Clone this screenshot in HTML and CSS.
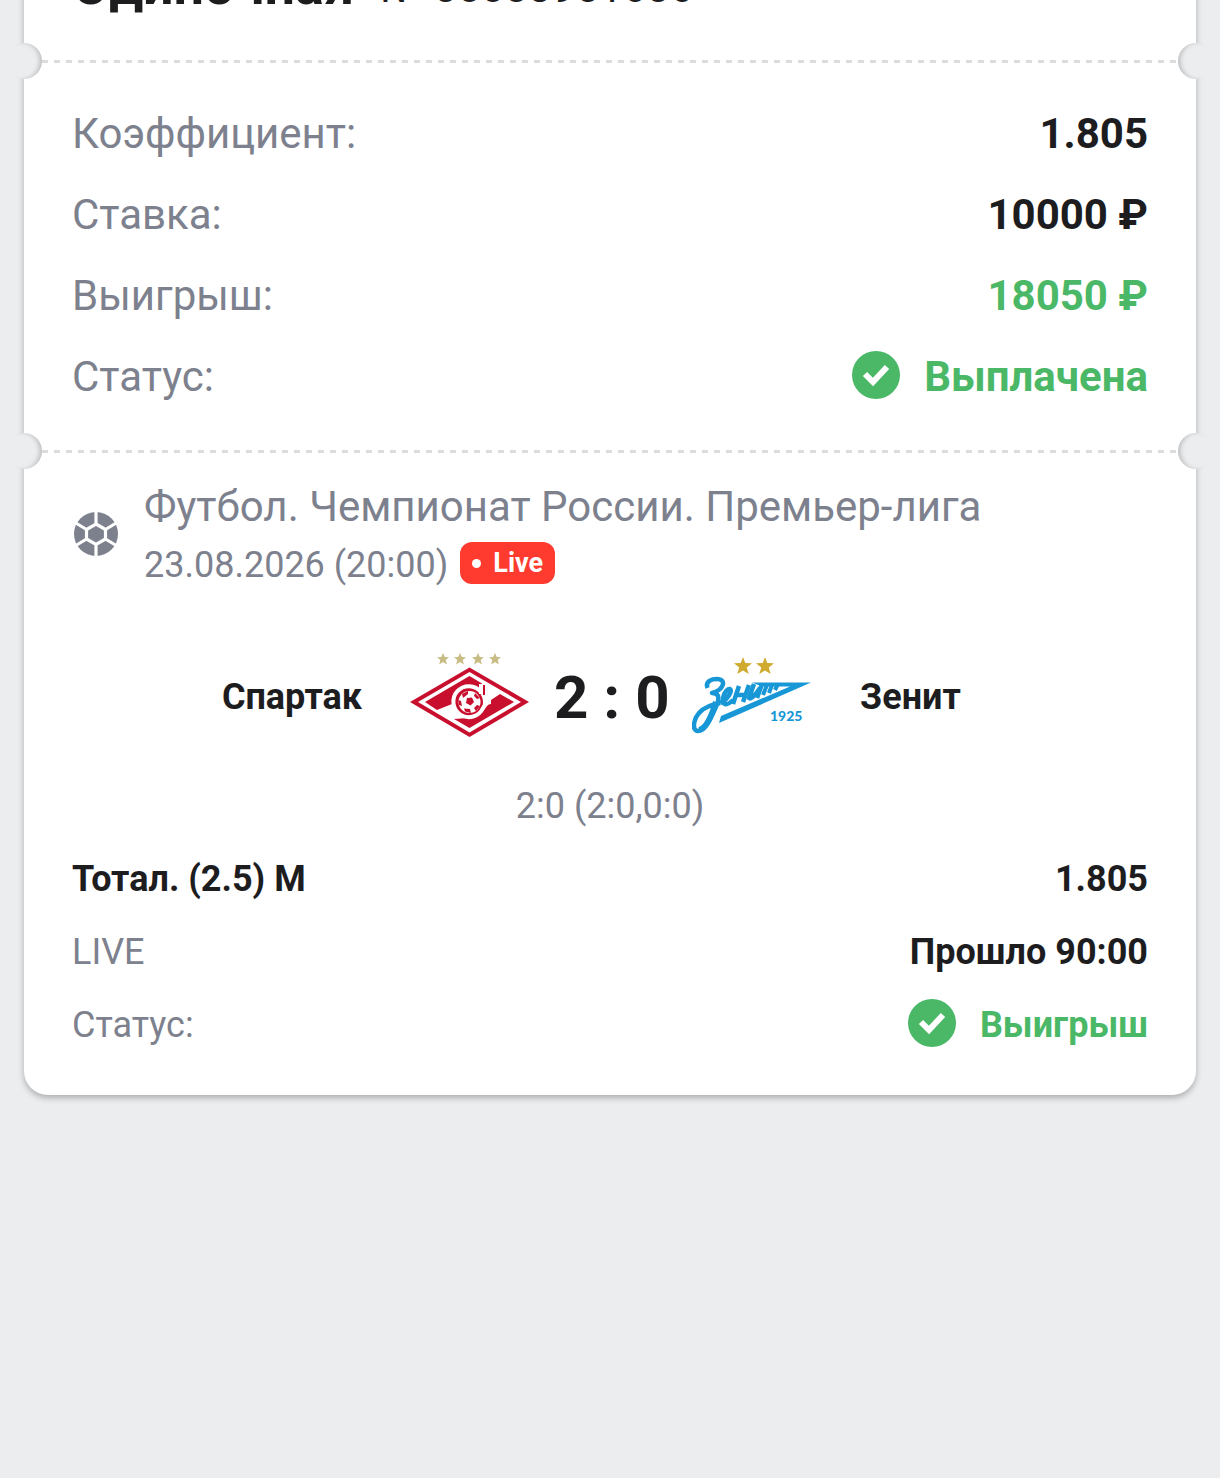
FILE: index.html
```html
<!DOCTYPE html>
<html lang="ru">
<head>
<meta charset="utf-8">
<meta name="viewport" content="width=device-width, initial-scale=1">
<title>Одиночная</title>
<link rel="stylesheet" href="styles.css">
</head>
<body>
<main class="page">
  <article class="ticket">
    <header class="ticket-header">
      <h1 class="ticket-title">Одиночная</h1>
      <span class="ticket-number">№ 80083951686</span>
    </header>

    <div class="tear"></div>

    <dl class="summary">
      <div class="row"><dt>Коэффициент:</dt><dd>1.805</dd></div>
      <div class="row"><dt>Ставка:</dt><dd>10000 ₽</dd></div>
      <div class="row"><dt>Выигрыш:</dt><dd class="good">18050 ₽</dd></div>
      <div class="row"><dt>Статус:</dt>
        <dd class="good status">
          <svg class="check" viewBox="0 0 48 48" aria-hidden="true"><circle cx="24" cy="24" r="24" fill="#4ab866"/><path d="M13 23 L21 31 L35 16" fill="none" stroke="#fff" stroke-width="6"/></svg>
          Выплачена
        </dd>
      </div>
    </dl>

    <div class="tear"></div>

    <section class="event">
      <div class="league">
        <svg class="ball" viewBox="0 0 44 44" aria-hidden="true">
          <circle cx="22" cy="22" r="22" fill="#7d818e"/>
          <path d="M22 12 L31.500 17.500 V27 L22 32.500 L12.500 27 V17.500Z M22 12 V-1 M31.500 17.500 L43 10.500 M31.500 27 L43 34 M22 32.500 V45 M12.500 27 L1 34 M12.500 17.500 L1 10.500" fill="none" stroke="#fff" stroke-width="3.200"/>
        </svg>
        <div class="league-text">
          <h2 class="league-name">Футбол. Чемпионат России. Премьер-лига</h2>
          <div class="league-meta">
            <time datetime="2026-08-23T20:00">23.08.2026 (20:00)</time>
            <span class="live">Live</span>
          </div>
        </div>
      </div>

      <div class="match">
        <span class="team team-home">Спартак</span>
        <svg class="logo" viewBox="0 0 120 96" role="img" aria-label="Спартак">
          <defs><path id="star" d="M0 -6 L1.800 -2 L6 -1.800 L2.700 1 L3.900 5.500 L0 3 L-3.900 5.500 L-2.700 1 L-6 -1.800 L-1.800 -2Z"/></defs>
          <g fill="#c8bb83"><use href="#star" x="33" y="11"/><use href="#star" x="50" y="11"/><use href="#star" x="68" y="11"/><use href="#star" x="85" y="11"/></g>
          <path d="M59.500 19.500 L119 54 L59.500 89 L0 54Z" fill="#c8102e"/>
          <path d="M59.500 24 L111 54 L59.500 84.500 L8 54Z" fill="#fff"/>
          <path d="M15 54 L59.500 28 L72 35.500 V46 L42 56 L27 62Z M44 71 L58 70 L74 62 L81 52 L90 46 L104 54 L59.500 80Z" fill="#c8102e"/>
          <circle cx="58" cy="54.500" r="15" fill="#c8102e"/>
          <path d="M71 36 V46 M71 44 A15.500 15.500 0 1 0 73 60 C75 57 76 54 81 54" fill="none" stroke="#fff" stroke-width="4"/>
          <path d="M74 37 V47" fill="none" stroke="#c8102e" stroke-width="2"/>
          <circle cx="59.500" cy="54" r="11" fill="#fff"/>
          <path d="M57 50 L62 49.500 L64 54 L60.500 57.500 L56 55Z M52 46 L58 43 L58 46 L53 50Z M65 45 L70 50 L67 51 L64 48Z M67 57 L70 58 L66 63 L64 60Z M54 60.500 L60 61 L61 65 L55 63.500Z M48.500 52 L51 53 L52 58 L49 57Z" fill="#c8102e"/>
        </svg>
        <strong class="score">2 : 0</strong>
        <svg class="logo" viewBox="0 0 120 96" role="img" aria-label="Зенит">
          <g fill="#d0aa2e"><path transform="translate(51 18) scale(1.500)" d="M0 -6 L1.500 -2 L6 -1.800 L2.500 1 L3.800 5.300 L0 3 L-3.800 5.300 L-2.500 1 L-6 -1.800 L-1.500 -2Z"/><path transform="translate(73 18) scale(1.500)" d="M0 -6 L1.500 -2 L6 -1.800 L2.500 1 L3.800 5.300 L0 3 L-3.800 5.300 L-2.500 1 L-6 -1.800 L-1.500 -2Z"/></g>
          <g fill="none" stroke="#1797d6" stroke-linejoin="round">
            <path d="M15.500 40 C13 33 20 31 25 31 C35 31 32 42 20 45 C29 45 27 53 23 61 C17 73 13 82 6 83 C0 83 1 72 7 65 C12 59 20 57 28 55" stroke-width="4.500"/>
            <path d="M24 54 C20 67 14 81 7 82" stroke-width="6"/>
            <path d="M28 55 C35 52 41 43 38 41 C33 40 28 54 33 56 C36 57 39 54 41 52" stroke-width="4.500"/>
            <path d="M47 38 L41 56 M45 47 H53 M57 37 L51 54" stroke-width="4.500"/>
            <path d="M62 36 L57 50 C59 52 65 45 68 40 M70 36 L65 50" stroke-width="4.500"/>
            <path d="M75 37 L71 47 M80 37 L77 45 M86 36 L83 42" stroke-width="4"/>
          </g>
          <path d="M60 34.500 L119 34.500 L27 75 L29 68 L98 38.500 L70 38.500Z" fill="#1797d6"/>
          <text class="logo-year" x="78" y="73">1925</text>
        </svg>
        <span class="team">Зенит</span>
      </div>
      <p class="periods">2:0 (2:0,0:0)</p>

      <dl class="bet">
        <div class="row"><dt class="strong">Тотал. (2.5) М</dt><dd>1.805</dd></div>
        <div class="row"><dt>LIVE</dt><dd>Прошло 90:00</dd></div>
        <div class="row"><dt>Статус:</dt>
          <dd class="good status">
            <svg class="check" viewBox="0 0 48 48" aria-hidden="true"><circle cx="24" cy="24" r="24" fill="#4ab866"/><path d="M13 23 L21 31 L35 16" fill="none" stroke="#fff" stroke-width="6"/></svg>
            Выигрыш
          </dd>
        </div>
      </dl>
    </section>
  </article>
</main>
</body>
</html>
```
FILE: styles.css
```css
* { box-sizing: border-box; }

body {
  margin: 0;
  min-height: 100vh;
  background: #ebedef;
  color: #1d1d1f;
  font-family: Roboto, "Noto Sans", sans-serif;
  overflow-x: hidden;
}

h1, h2, p, dl, dd { margin: 0; }

/* The view is scrolled so that the header sits under the top edge. */
.page {
  margin-top: -72px;
  padding: 0 24px 24px;
}

.ticket {
  background: #fff;
  border-radius: 24px;
  box-shadow: 0 3px 6px rgba(0, 0, 0, 0.27);
}

.ticket-header {
  display: flex;
  align-items: flex-start;
  gap: 26px;
  height: 115px;
  padding: 22px 48px 0;
}

.ticket-title { font-size: 54px; line-height: 72px; font-weight: 700; }
.ticket-number { font-size: 42px; line-height: 76px; }

/* Perforated line with a half-round notch at each end */
.tear {
  display: flex;
  justify-content: space-between;
  align-items: center;
  height: 36px;
  margin: 0 -18px;
  background: repeating-linear-gradient(90deg, #dcdcdc 0 6px, transparent 6px 12px) 36px 17px / calc(100% - 72px) 3px no-repeat;
}

.tear::before,
.tear::after {
  content: "";
  width: 36px;
  height: 36px;
  border-radius: 50%;
  background: #ebedef;
}

.tear::before { box-shadow: inset -4px 0 5px -2px rgba(0, 0, 0, 0.22); }
.tear::after { box-shadow: inset 4px 0 5px -2px rgba(0, 0, 0, 0.22); }

.row {
  display: flex;
  justify-content: space-between;
  align-items: center;
  color: #7d818e;
}

.row dd, .strong { color: #1d1d1f; font-weight: 700; }
.row .good { color: #4ab866; }

.summary { padding: 14px 48px 16px; font-size: 42px; }
.summary .row { height: 81px; }

.status { display: flex; align-items: center; gap: 24px; }
.check { width: 48px; height: 48px; margin-bottom: 4px; }

.event { padding: 12px 48px 34px; }

.league { display: flex; align-items: center; gap: 26px; color: #7d818e; }
.ball { width: 44px; height: 44px; margin: 0 0 10px 2px; flex: none; }
.league-name { font-size: 42px; line-height: 52px; font-weight: 400; }
.league-meta { display: flex; align-items: center; gap: 12px; font-size: 36px; line-height: 64px; }

.live {
  display: flex;
  align-items: center;
  gap: 12px;
  height: 42px;
  margin-bottom: 4px;
  padding: 0 12px;
  border-radius: 12px;
  background: #ff3b30;
  color: #fff;
  font-size: 27px;
  font-weight: 700;
}

.live::before { content: ""; width: 9px; height: 9px; border-radius: 50%; background: #fff; }

.match {
  display: grid;
  grid-template-columns: 1fr 120px 114px 120px 1fr;
  align-items: center;
  column-gap: 24px;
  margin-top: 46px;
  padding-left: 2px;
  height: 108px;
}

.team { padding: 0 24px; font-size: 36px; font-weight: 700; }
.team-home { text-align: right; }
.logo { width: 120px; height: 96px; margin-bottom: 2px; }
.logo-year { font: 900 14px Lato, sans-serif; fill: #1797d6; }
.score { font-size: 60px; text-align: center; white-space: nowrap; }

.periods { margin-top: 31px; font-size: 36px; line-height: 48px; text-align: center; color: #7d818e; }

.bet { margin-top: 12px; font-size: 36px; }
.bet .row { height: 73px; }

@media (max-width: 900px) {
  .league-meta { flex-wrap: wrap; }
  .match { column-gap: 8px; }
  .team { padding: 0 8px; }
}
```
